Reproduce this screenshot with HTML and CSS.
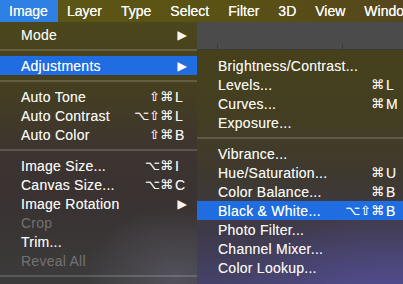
FILE: index.html
```html
<!DOCTYPE html>
<html>
<head>
  <title>Image menu</title>
  <link rel="stylesheet" href="styles.css">
</head>
<body>
  <div class="screen">
    <div class="menubar">
      <span class="bar-item active">Image</span>
      <span class="bar-item">Layer</span>
      <span class="bar-item">Type</span>
      <span class="bar-item">Select</span>
      <span class="bar-item">Filter</span>
      <span class="bar-item">3D</span>
      <span class="bar-item">View</span>
      <span class="bar-item">Window</span>
    </div>

    <div class="workspace">
      <div class="menu main-menu">
        <div class="item"><span class="label">Mode</span><span class="arrow">&#9654;</span></div>
        <div class="sep"></div>
        <div class="item selected"><span class="label">Adjustments</span><span class="arrow">&#9654;</span></div>
        <div class="sep"></div>
        <div class="item"><span class="label">Auto Tone</span><span class="keys"><span class="mods">⇧⌘</span><span class="key">L</span></span></div>
        <div class="item"><span class="label">Auto Contrast</span><span class="keys"><span class="mods">⌥⇧⌘</span><span class="key">L</span></span></div>
        <div class="item"><span class="label">Auto Color</span><span class="keys"><span class="mods">⇧⌘</span><span class="key">B</span></span></div>
        <div class="sep"></div>
        <div class="item"><span class="label">Image Size...</span><span class="keys"><span class="mods">⌥⌘</span><span class="key">I</span></span></div>
        <div class="item"><span class="label">Canvas Size...</span><span class="keys"><span class="mods">⌥⌘</span><span class="key">C</span></span></div>
        <div class="item"><span class="label">Image Rotation</span><span class="arrow">&#9654;</span></div>
        <div class="item disabled"><span class="label">Crop</span></div>
        <div class="item"><span class="label">Trim...</span></div>
        <div class="item disabled"><span class="label">Reveal All</span></div>
        <div class="sep"></div>
      </div>

      <div class="right-side">
        <div class="options-bar">
          <span class="tick"></span>
          <span class="tick"></span>
        </div>
        <div class="menu sub-menu">
          <div class="item"><span class="label">Brightness/Contrast...</span></div>
          <div class="item"><span class="label">Levels...</span><span class="keys"><span class="mods">⌘</span><span class="key">L</span></span></div>
          <div class="item"><span class="label">Curves...</span><span class="keys"><span class="mods">⌘</span><span class="key">M</span></span></div>
          <div class="item"><span class="label">Exposure...</span></div>
          <div class="sep"></div>
          <div class="item"><span class="label">Vibrance...</span></div>
          <div class="item"><span class="label">Hue/Saturation...</span><span class="keys"><span class="mods">⌘</span><span class="key">U</span></span></div>
          <div class="item"><span class="label">Color Balance...</span><span class="keys"><span class="mods">⌘</span><span class="key">B</span></span></div>
          <div class="item selected"><span class="label">Black &amp; White...</span><span class="keys"><span class="mods">⌥⇧⌘</span><span class="key">B</span></span></div>
          <div class="item"><span class="label">Photo Filter...</span></div>
          <div class="item"><span class="label">Channel Mixer...</span></div>
          <div class="item"><span class="label">Color Lookup...</span></div>
        </div>
      </div>
    </div>
  </div>
</body>
</html>
```

FILE: styles.css
```css
* {
  margin: 0;
  padding: 0;
  box-sizing: border-box;
}

body {
  font-family: 'Liberation Sans', Arial, 'DejaVu Sans', sans-serif;
  font-size: 14px;
  color: #f4f4f0;
  background: #3a3630;
  width: 403px;
  height: 284px;
  overflow: hidden;
}

.screen {
  width: 403px;
  height: 284px;
  overflow: hidden;
  display: flex;
  flex-direction: column;
}

/* top menu bar */
.menubar {
  height: 22px;
  flex: 0 0 22px;
  display: flex;
  align-items: stretch;
  background: linear-gradient(90deg, #5c5615 0%, #5a5214 55%, #564a19 85%, #55451f 100%);
  white-space: nowrap;
}

.bar-item {
  display: flex;
  align-items: center;
  padding: 0 10px 0 9px;
  color: #f8f8f4;
  text-shadow: 0 0 0.6px #fff;
}

.bar-item.active {
  background: #2d7fe4;
}

.workspace {
  flex: 1;
  display: flex;
  align-items: stretch;
}

/* menus */
.menu {
  display: flex;
  flex-direction: column;
  letter-spacing: 0.25px;
}

.main-menu {
  width: 197px;
  flex: 0 0 197px;
  padding-top: 3px;
  background:
    radial-gradient(ellipse 90px 70px at 175px 255px, rgba(115, 115, 140, 0.4), transparent),
    linear-gradient(180deg, #4b471c 0%, #453f21 25%, #3d3430 50%, #393232 70%, #3c3b3b 100%);
}

.item {
  height: 19px;
  flex: 0 0 19px;
  display: flex;
  align-items: center;
  justify-content: space-between;
  padding: 0 11px 0 21px;
  white-space: nowrap;
  text-shadow: 0 0 0.3px rgba(255, 255, 255, 0.6);
}

.item.selected {
  background: #1f6de0;
  color: #fff;
}

.item.disabled {
  color: rgba(255, 255, 255, 0.3);
  text-shadow: none;
}

.sep {
  height: 12px;
  flex: 0 0 12px;
  display: flex;
  align-items: center;
}

.sep::after {
  content: '';
  display: block;
  width: 100%;
  height: 2px;
  background: rgba(255, 255, 255, 0.16);
}

.arrow {
  font-family: 'DejaVu Sans', sans-serif;
  font-size: 12px;
  margin-right: -1px;
}

.keys {
  display: flex;
  align-items: center;
}

.mods {
  font-family: 'DejaVu Sans', sans-serif;
  font-size: 13px;
  letter-spacing: 0;
}

.key {
  width: 11px;
  margin-left: 2px;
}

.right-side {
  flex: 0 0 211px;
  display: flex;
  flex-direction: column;
}

.options-bar {
  height: 28px;
  flex: 0 0 28px;
  background: #4b4b4b;
  border-bottom: 1px solid #3a3a3a;
  position: relative;
}

.tick {
  position: absolute;
  bottom: 0;
  width: 1px;
  height: 5px;
  background: #3a3a3a;
}

.tick:first-child {
  left: 20px;
}

.tick:last-child {
  left: 145px;
}

.sub-menu {
  flex: 1;
  padding-top: 6px;
  background:
    radial-gradient(ellipse 170px 100px at 195px 250px, rgba(90, 85, 170, 0.6), transparent),
    linear-gradient(180deg, #46411b 0%, #433e22 30%, #3e3930 55%, #3f3a4c 80%, #45426a 100%);
}
```
